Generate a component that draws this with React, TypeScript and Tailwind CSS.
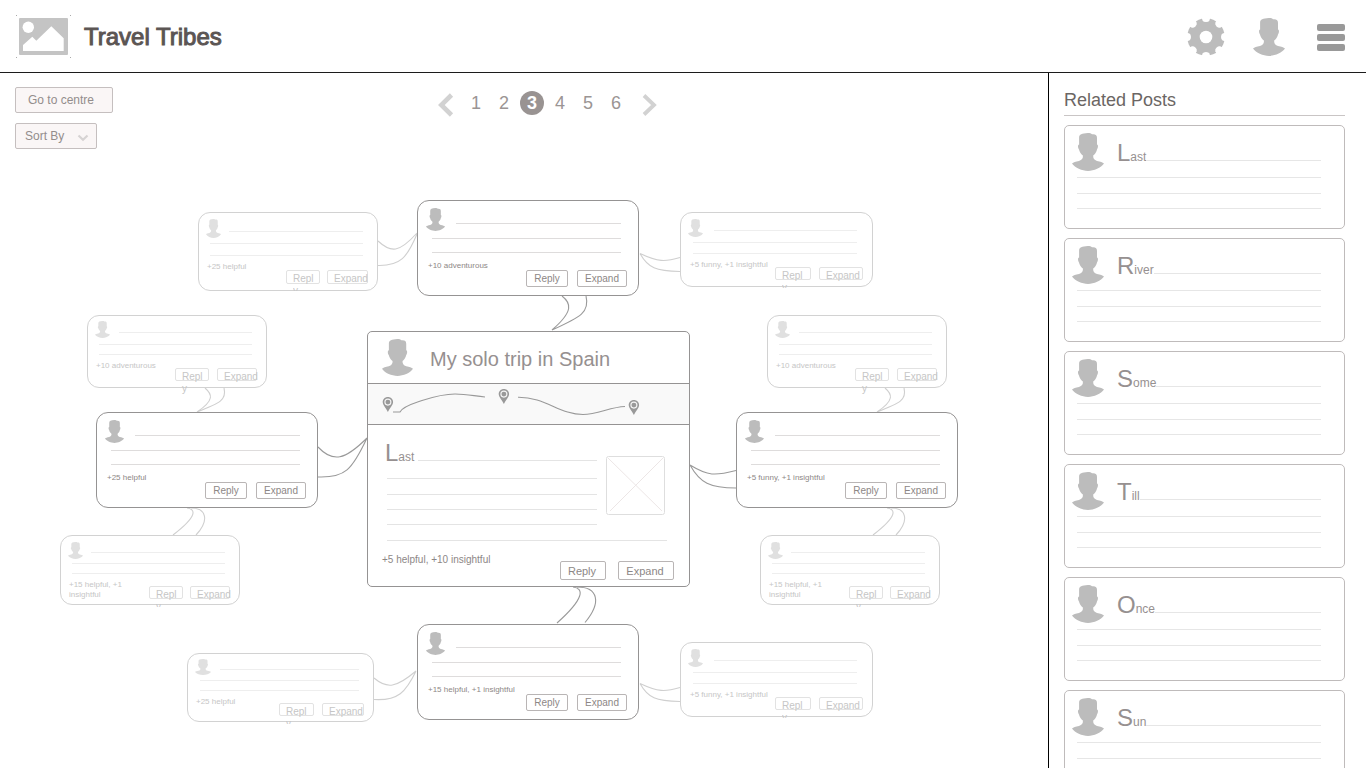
import React from "react";

const AVATAR_PATH =
  "M15.8 0C18 0 19.2 .3 20 1.3C23.6 1 25 2 25 5V11.5C26.4 11.6 26.2 15 25 16.4C24.6 19 22.800 21.200 21.200 22.600C21 25.400 22.200 27.200 25 28C28.500 28.700 30.600 29.200 32 30.600C29 35 22 37.900 16 37.900C10 37.900 3 35 0 30.600C1.400 29.200 3.500 28.700 7 28C9.800 27.200 11.200 25.400 10.900 22.600C9.300 21.200 7.400 19 7 16.400C5.800 15 5.600 11.600 7.100 11.500V4.600C7.100 1.400 10 .4 15.800 0Z";

function Avatar({ className }: { className: string }) {
  return (
    <svg viewBox="0 0 32 38" preserveAspectRatio="none" className={`shrink-0 ${className}`} aria-hidden="true">
      <path d={AVATAR_PATH} fill="currentColor" />
    </svg>
  );
}

function Logo() {
  return (
    <svg viewBox="0 0 56 44" className="h-11 w-14 shrink-0" aria-hidden="true">
      <rect x="3" y="3" width="49" height="37" rx="1" fill="#c4c4c4" />
      <circle cx="12.3" cy="12.3" r="5.7" fill="#fff" />
      <path d="M7 30L16.3 21.7L20.3 25.7L35.3 11.3L47.7 23.3V36H7Z" fill="#fff" />
      <path d="M0 0h1v1h-1zM54 0h1v1h-1zM0 42h1v1h-1zM54 42h1v1h-1z" fill="#aaa" />
    </svg>
  );
}

function Gear() {
  return (
    <svg viewBox="-19 -19 38 38" className="h-[38px] w-[38px]" aria-hidden="true">
      <circle r="18.7" fill="#bcbcbc" />
      <circle r="6.3" fill="#fff" />
      {[0, 45, 90, 135, 180, 225, 270, 315].map((a) => (
        <path key={a} transform={`rotate(${a})`} d="M-4.6 -20L-3.4 -16.6Q-2.8 -15 0 -15Q2.8 -15 3.4 -16.6L4.6 -20Z" fill="#fff" />
      ))}
    </svg>
  );
}

function Header() {
  return (
    <header className="flex h-[73px] shrink-0 items-center border-b border-[#1c1c1c] pt-0.5 pr-[21px] pl-4">
      <Logo />
      <h1 className="ml-3 text-2xl leading-7 font-normal text-[#5b5553] [-webkit-text-stroke:1px_#5b5553]">Travel Tribes</h1>
      <div className="ml-auto flex items-center">
        <button type="button" aria-label="Settings">
          <Gear />
        </button>
        <button type="button" aria-label="Profile" className="ml-7 text-[#bcbcbc]">
          <Avatar className="h-[38px] w-8" />
        </button>
        <button type="button" aria-label="Menu" className="ml-8 flex flex-col gap-[3px]">
          <span className="h-[7px] w-7 rounded-xs bg-[#999]" />
          <span className="h-[7px] w-7 rounded-xs bg-[#999]" />
          <span className="h-[7px] w-7 rounded-xs bg-[#999]" />
        </button>
      </div>
    </header>
  );
}

function Toolbar() {
  return (
    <div className="grid grid-cols-[98px_1fr] items-start pt-3.5 pr-[65px] pl-[15px]">
      <div className="flex flex-col items-start gap-2.5">
        <button type="button" className="h-[26px] w-full rounded-xs border border-[#c5bfbf] bg-[#faf6f6] pr-1.5 text-xs text-[#938d8c]">
          Go to centre
        </button>
        <div className="relative">
          <select
            aria-label="Sort By"
            className="block h-[26px] w-[82px] appearance-none rounded-xs border border-[#c5bfbf] bg-[#faf6f6] pl-[9px] text-xs text-[#938d8c]"
          >
            <option>Sort By</option>
          </select>
          <svg viewBox="0 0 12 8" className="pointer-events-none absolute top-[11px] right-2 h-2 w-3" aria-hidden="true">
            <path d="M1.5 1.5L6 5.8L10.5 1.5" fill="none" stroke="#d6d3d3" strokeWidth="2.2" />
          </svg>
        </div>
      </div>
      <nav aria-label="Pages" className="flex items-center justify-center pt-0.5 text-lg leading-6 text-[#9b9594]">
        <button type="button" aria-label="Previous page" className="mt-1 mr-2.5">
          <svg viewBox="0 0 16 24" className="h-6 w-4" aria-hidden="true">
            <path d="M13.5 2L3.3 12L13.5 22" fill="none" stroke="#d2d2d2" strokeWidth="4.6" />
          </svg>
        </button>
        <ol className="flex gap-1">
          {[1, 2, 3, 4, 5, 6].map((n) => (
            <li key={n}>
              <a
                href={`#page-${n}`}
                className={
                  n === 3
                    ? "block h-6 w-6 rounded-full bg-[#999392] text-center font-bold text-white"
                    : "block h-6 w-6 text-center"
                }
              >
                {n}
              </a>
            </li>
          ))}
        </ol>
        <button type="button" aria-label="Next page" className="mt-1 ml-3.5">
          <svg viewBox="0 0 16 24" className="h-6 w-4" aria-hidden="true">
            <path d="M2 2.5L12 12L2 21.5" fill="none" stroke="#d2d2d2" strokeWidth="3.8" />
          </svg>
        </button>
      </nav>
    </div>
  );
}

const REPLY_STYLE = {
  pad: "pt-[7px] pl-2",
  avatar: "h-[23px] w-[19px]",
  first: "mt-[15px] ml-[11px] mr-[17px]",
  second: "mt-[7px] ml-1.5 mr-[17px]",
  third: "mt-[13px] ml-1.5 mr-[17px]",
  footer: "mt-2 ml-0.5 mr-[11px]",
  actions: "mt-[9px] gap-[9px]",
  reply: "h-[17px] w-[42px]",
  expand: "h-[17px] w-[50px]",
};

type CardStyle = typeof REPLY_STYLE;

const NESTED_TALL: CardStyle = {
  pad: "pt-1.5 pl-[7px]",
  avatar: "h-[19px] w-[15px]",
  first: "mt-3 ml-2 mr-3.5",
  second: "mt-[5px] ml-1 mr-3.5",
  third: "mt-[11px] ml-1 mr-3.5",
  footer: "mt-1.5 ml-px mr-[9px]",
  actions: "mt-2 gap-[7px]",
  reply: "h-3.5 w-[34px]",
  expand: "h-3.5 w-[41px]",
};

const NESTED_WIDE: CardStyle = {
  pad: "pt-1.5 pl-[7px]",
  avatar: "h-[18px] w-[15px]",
  first: "mt-[11px] ml-[11px] mr-[15px]",
  second: "mt-[5px] ml-[5px] mr-[15px]",
  third: "mt-2.5 ml-[5px] mr-[15px]",
  footer: "mt-1.5 ml-0.5 mr-[9px]",
  actions: "mt-[7px] gap-2",
  reply: "h-[13px] w-9",
  expand: "h-[13px] w-11",
};

const NESTED_UPPER: CardStyle = {
  pad: "pt-[5px] pl-[7px]",
  avatar: "h-[17px] w-[15px]",
  first: "mt-[11px] ml-[9px] mr-3.5",
  second: "mt-1.5 ml-1 mr-3.5",
  third: "mt-[9px] ml-1 mr-3.5",
  footer: "mt-1.5 ml-px mr-[9px]",
  actions: "mt-[7px] gap-2",
  reply: "h-[13px] w-[34px]",
  expand: "h-[13px] w-10",
};

const NESTED_LOWER: CardStyle = {
  pad: "pt-1.5 pl-[7px]",
  avatar: "h-[17px] w-[15px]",
  first: "mt-2.5 ml-2 mr-3.5",
  second: "mt-1 ml-1 mr-3.5",
  third: "mt-[9px] ml-1 mr-3.5",
  footer: "mt-1.5 ml-px mr-[9px]",
  actions: "mt-1.5 gap-[7px]",
  reply: "h-[13px] w-[34px]",
  expand: "h-[13px] w-10",
};

const NESTED_BASE: CardStyle = {
  pad: "pt-[5px] pl-[7px]",
  avatar: "h-4 w-4",
  first: "mt-2.5 ml-[9px] mr-3.5",
  second: "mt-[5px] ml-[5px] mr-3.5",
  third: "mt-[9px] ml-[5px] mr-3.5",
  footer: "mt-1.5 ml-px mr-[9px]",
  actions: "mt-1.5 gap-2",
  reply: "h-[13px] w-[35px]",
  expand: "h-[13px] w-[42px]",
};

interface CardData {
  x: number;
  y: number;
  w: number;
  h: number;
  score: string;
  look: CardStyle;
  nested?: boolean;
  spill?: boolean;
}

const CARDS: CardData[] = [
  { x: 417, y: 51, w: 222, h: 96, score: "+10 adventurous", look: REPLY_STYLE },
  { x: 96, y: 263, w: 222, h: 96, score: "+25 helpful", look: REPLY_STYLE },
  { x: 736, y: 263, w: 222, h: 96, score: "+5 funny, +1 insightful", look: REPLY_STYLE },
  { x: 417, y: 475, w: 222, h: 96, score: "+15 helpful, +1 insightful", look: REPLY_STYLE },
  { x: 198, y: 63, w: 180, h: 79, score: "+25 helpful", look: NESTED_TALL, nested: true },
  { x: 680, y: 63, w: 193, h: 75, score: "+5 funny, +1 insightful", look: NESTED_WIDE, nested: true },
  { x: 87, y: 166, w: 180, h: 73, score: "+10 adventurous", look: NESTED_UPPER, nested: true, spill: true },
  { x: 767, y: 166, w: 180, h: 73, score: "+10 adventurous", look: NESTED_UPPER, nested: true, spill: true },
  { x: 60, y: 386, w: 180, h: 70, score: "+15 helpful, +1 insightful", look: NESTED_LOWER, nested: true },
  { x: 760, y: 386, w: 180, h: 70, score: "+15 helpful, +1 insightful", look: NESTED_LOWER, nested: true },
  { x: 187, y: 504, w: 187, h: 69, score: "+25 helpful", look: NESTED_BASE, nested: true },
  { x: 680, y: 493, w: 193, h: 75, score: "+5 funny, +1 insightful", look: NESTED_WIDE, nested: true },
];

function PostCard({ x, y, w, h, score, look, nested, spill }: CardData) {
  const rule = nested ? "h-px bg-[#eeeeee]" : "h-px bg-[#dedcdc]";
  const button = nested
    ? "flex items-start rounded-xs border border-[#e2e2e2] pt-0.5 pl-1.5 text-left text-[10px] leading-3 text-[#c6c6c6]"
    : "flex items-center justify-center rounded-xs border border-[#b9b5b5] text-[10px] leading-3 text-[#8d8786]";
  return (
    <article
      style={{ left: x, top: y, width: w, height: h }}
      className={`absolute rounded-xl border bg-white ${nested ? "border-[#d2d2d2]" : "border-[#959393]"} ${look.pad}`}
    >
      <div className="flex items-start">
        <Avatar className={`${look.avatar} ${nested ? "text-[#e0e0e0]" : "text-[#bcbcbc]"}`} />
        <div className={`flex-1 ${rule} ${look.first}`} />
      </div>
      <div className={`${rule} ${look.second}`} />
      <div className={`${rule} ${look.third}`} />
      <div className={`flex items-start ${look.footer}`}>
        <p className={`min-w-0 flex-1 text-[8px] leading-[10px] ${nested ? "text-[#c6c6c6]" : "text-[#8d8786]"}`}>{score}</p>
        <div className={`flex shrink-0 items-start ${look.actions}`}>
          <button type="button" className={`${button} ${look.reply}`}>
            {nested ? (
              <span className={`w-[22px] shrink-0 break-all ${spill ? "h-6" : "h-[18px] overflow-hidden"}`}>Reply</span>
            ) : (
              "Reply"
            )}
          </button>
          <button type="button" className={`${button} ${look.expand}`}>
            Expand
          </button>
        </div>
      </div>
    </article>
  );
}

function Lead({ word }: { word: string }) {
  return (
    <span className="text-xs leading-6 text-[#969090]">
      <span className="text-2xl leading-6">{word[0]}</span>
      {word.slice(1)}
    </span>
  );
}

function Pin({ x, y }: { x: number; y: number }) {
  return (
    <g transform={`translate(${x} ${y})`}>
      <path d="M5.2 0C8.2 0 10.4 2.2 10.4 5.1C10.4 8 7.3 11 5.2 15C3.1 11 0 8 0 5.1C0 2.2 2.2 0 5.2 0Z" fill="#999" />
      <circle cx="5.2" cy="5.1" r="3" fill="none" stroke="#f4f4f4" strokeWidth="1.1" />
    </g>
  );
}

function FeaturedPost() {
  return (
    <article className="absolute top-[182px] left-[367px] w-[323px] rounded-[5px] border border-[#959393] bg-white">
      <div className="flex h-[51px] items-center pl-3.5">
        <Avatar className="h-[37px] w-[31px] text-[#bcbcbc]" />
        <h2 className="ml-[17px] pt-0.5 text-xl leading-6 text-[#969090]">My solo trip in Spain</h2>
      </div>
      <div className="h-[42px] border-y border-[#959393] bg-[#f9f9f9]">
        <svg viewBox="0 0 321 40" className="h-10 w-full" role="img" aria-label="Route with three stops">
          <g transform="translate(-368 -384)">
            <path
              d="M393 412H400C403 406 415 403 422 400.500C436 396 444 394 455 394C467 394 474 396 485 397M518 397.300C545 397 560 414.500 583 414.500C598 414.500 610 407 625 406.500"
              fill="none"
              stroke="#999"
              strokeWidth="1.1"
            />
            <Pin x={382.7} y={397} />
            <Pin x={498.7} y={389} />
            <Pin x={628.7} y={400} />
          </g>
        </svg>
      </div>
      <div className="pr-[15px] pb-1.5 pl-[19px]">
        <div className="flex items-start gap-[9px]">
          <div className="w-[210px] pt-4">
            <div className="-ml-0.5 flex items-baseline gap-1">
              <Lead word="Last" />
              <div className="h-px flex-1 bg-[#e4e4e4]" />
            </div>
            <div className="mt-[9px] h-px bg-[#e4e4e4]" />
            <div className="mt-[15px] h-px bg-[#e4e4e4]" />
            <div className="mt-3.5 h-px bg-[#e4e4e4]" />
            <div className="mt-3.5 h-px bg-[#e4e4e4]" />
          </div>
          <svg viewBox="0 0 59 59" className="mt-[31px] h-[59px] w-[59px]" aria-hidden="true">
            <rect x=".5" y=".5" width="58" height="58" rx="2" fill="none" stroke="#dedede" />
            <path d="M2 2L56 55M57 2L4 55" stroke="#ece6e6" fill="none" />
          </svg>
        </div>
        <div className="mt-[15px] mr-[7px] h-px bg-[#e4e4e4]" />
        <div className="mt-[13px] -ml-[5px] flex items-start text-[#8d8786]">
          <p className="flex-1 text-[10px] leading-3">+5 helpful, +10 insightful</p>
          <div className="mt-[7px] flex gap-3 text-[11px] leading-4">
            <button type="button" className="h-[19px] w-[46px] rounded-xs border border-[#b9b5b5] pr-0.5">
              Reply
            </button>
            <button type="button" className="h-[19px] w-14 rounded-xs border border-[#b9b5b5] pr-0.5">
              Expand
            </button>
          </div>
        </div>
      </div>
    </article>
  );
}

function Connectors() {
  return (
    <svg viewBox="0 0 1048 619" className="block h-[619px] w-full" aria-hidden="true">
      <g transform="translate(0 -149)" fill="none" stroke="#9a9a9a" strokeWidth="1.1">
        <path d="M562 296C571 303 574 311 552 330M586 296C590 312 581 317 552 330" />
        <path d="M318 447C333 463 345 460 367 438M318 477C345 478 352 470 367 438" />
        <path d="M690 465C708 476 715 476 736 470.500M690 465C700 483 710 488 736 488" />
        <path d="M573 587C584 588 585 598 557 623M577 587C598 587 602 602 585 622.500" />
        <g stroke="#cfcfcf">
          <path d="M640 253.500C658 262 665 262 680 257.500M640 253.500C648 268 656 271 680 271.500" />
          <path d="M640 683.500C658 692 665 692 680 687.500M640 683.500C648 698 656 701 680 701.500" />
          <path d="M378 241C391 253 399 253 417 233M378 265.500C400 266 407 258 417 234" />
          <path d="M374 678C387 689 396 688 416 671M374 699.500C398 701 406 692 416 671" />
          <path d="M205 388C212 394 215 400 197 412M224 388C227 400 220 403 197 412" />
          <path d="M885 388C892 394 895 400 877 412M904 388C907 400 900 403 877 412" />
          <path d="M187 508C195 509 199 515 173 535M191 508C206 508 210 520 196 535" />
          <path d="M887 508C895 509 899 515 873 535M891 508C906 508 910 520 896 535" />
        </g>
      </g>
    </svg>
  );
}

const RELATED = ["Last", "River", "Some", "Till", "Once", "Sun"];

function RelatedPosts() {
  return (
    <aside className="w-[318px] shrink-0 overflow-y-auto border-l border-black pr-[21px] pl-[15px] [scrollbar-width:none]">
      <h2 className="border-b border-[#c9c5c5] pt-[13px] pb-px text-lg leading-7 text-[#6b6664]">Related Posts</h2>
      <ul className="flex flex-col gap-[9px] pt-[9px]">
        {RELATED.map((word) => (
          <li key={word} className="h-[104px] rounded-[5px] border border-[#bfbbbb] pt-[7px] pr-[23px] pl-[7px]">
            <div className="flex items-start">
              <Avatar className="h-[38px] w-8 text-[#bcbcbc]" />
              <div className="mt-2 ml-[13px] flex flex-1 items-baseline">
                <Lead word={word} />
                <div className="h-px flex-1 bg-[#e6e6e6]" />
              </div>
            </div>
            <div className="mt-1.5 ml-[5px] h-px bg-[#e6e6e6]" />
            <div className="mt-[15px] ml-[5px] h-px bg-[#e6e6e6]" />
            <div className="mt-3.5 ml-[5px] h-px bg-[#e6e6e6]" />
          </li>
        ))}
      </ul>
    </aside>
  );
}

export default function App() {
  return (
    <div className="flex h-screen flex-col overflow-hidden bg-white font-['Liberation_Sans',Arial,sans-serif]">
      <Header />
      <div className="flex min-h-0 flex-1">
        <main className="min-w-0 flex-1 overflow-hidden">
          <Toolbar />
          <div className="relative mx-auto w-[1048px]">
            <Connectors />
            {CARDS.map((card) => (
              <PostCard key={`${card.x}-${card.y}`} {...card} />
            ))}
            <FeaturedPost />
          </div>
        </main>
        <RelatedPosts />
      </div>
    </div>
  );
}
